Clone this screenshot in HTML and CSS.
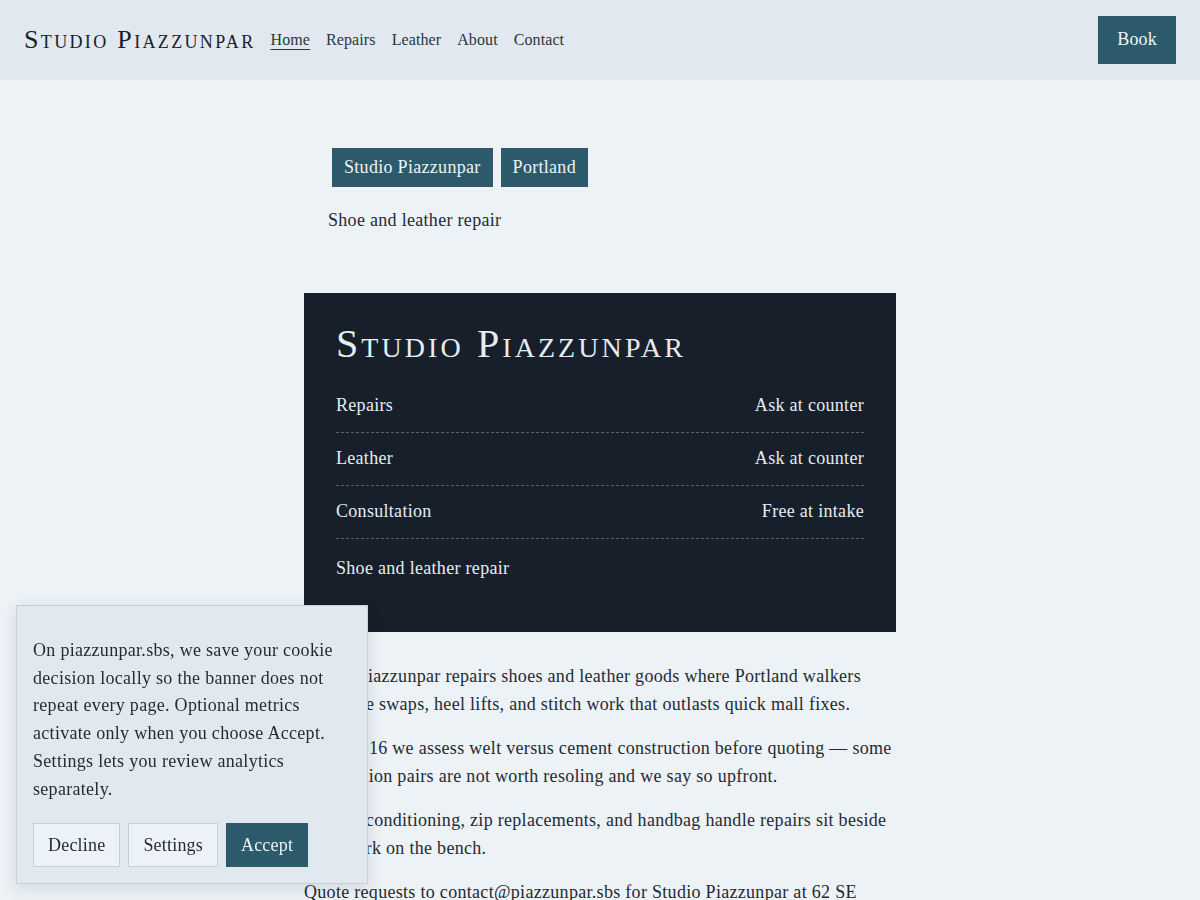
FILE: index.html
```html
<!DOCTYPE html>
<html lang="en">
<head>
  <meta charset="UTF-8" />
  <meta name="viewport" content="width=device-width, initial-scale=1.0"/>
  <title>Studio Piazzunpar - Shoe and leather repair</title>
  <link rel="stylesheet" href="styles.css">
</head>
<body>

  <header class="site-header">
    <a class="brand" href="#">Studio Piazzunpar</a>
    <nav class="main-nav">
      <a href="#" class="active">Home</a>
      <a href="#">Repairs</a>
      <a href="#">Leather</a>
      <a href="#">About</a>
      <a href="#">Contact</a>
    </nav>
    <a class="btn btn-book" href="#">Book</a>
  </header>

  <main class="page">
    <!-- Intro -->
    <section class="hero">
      <div class="tags">
        <span class="tag">Studio Piazzunpar</span>
        <span class="tag">Portland</span>
      </div>
      <p class="lead">Shoe and leather repair</p>
    </section>

    <!-- Services card -->
    <section class="card">
      <h1 class="card-title">Studio Piazzunpar</h1>
      <ul class="price-list">
        <li><span>Repairs</span><span>Ask at counter</span></li>
        <li><span>Leather</span><span>Ask at counter</span></li>
        <li><span>Consultation</span><span>Free at intake</span></li>
      </ul>
      <p class="card-note">Shoe and leather repair</p>
    </section>

    <section class="copy">
      <p>Studio Piazzunpar repairs shoes and leather goods where Portland walkers need sole swaps, heel lifts, and stitch work that outlasts quick mall fixes.</p>
      <p>Since 2016 we assess welt versus cement construction before quoting — some fast-fashion pairs are not worth resoling and we say so upfront.</p>
      <p>Leather conditioning, zip replacements, and handbag handle repairs sit beside shoe work on the bench.</p>
      <p>Quote requests to contact@piazzunpar.sbs for Studio Piazzunpar at 62 SE Morrison Street, Portland.</p>
    </section>
  </main>

  <!-- Cookie banner -->
  <div class="cookie-banner" id="cookie-banner">
    <p>On piazzunpar.sbs, we save your cookie decision locally so the banner does not repeat every page. Optional metrics activate only when you choose Accept. Settings lets you review analytics separately.</p>
    <div class="cookie-actions">
      <button class="btn btn-light" onclick="fecharBanner()">Decline</button>
      <button class="btn btn-light">Settings</button>
      <button class="btn btn-dark" onclick="fecharBanner()">Accept</button>
    </div>
  </div>

  <script>
    function fecharBanner() {
      document.getElementById("cookie-banner").style.display = 'none';
    }
  </script>
</body>
</html>
```

FILE: styles.css
```css
* { margin: 0; padding: 0; box-sizing: border-box; }
body {
  font-family: "Liberation Serif", "Times New Roman", serif;
  font-size: 18px;
  line-height: 1.55;
  letter-spacing: 0.3px;
  color: #1f2a33;
  background-color: #edf2f6;
}
a { color: inherit; text-decoration: none; }

.site-header {
  display: flex;
  align-items: center;
  height: 80px;
  padding: 0 24px;
  background-color: #e1e8f0;
}
.brand {
  font-size: 26px;
  font-variant: small-caps;
  letter-spacing: 0.09em;
  color: #17212a;
  line-height: 1;
}
.main-nav {
  display: flex;
  gap: 16px;
  margin-left: 15px;
  font-size: 16px;
  letter-spacing: 0.1px;
}
.main-nav a { color: #2a3640; }
.main-nav a.active {
  text-decoration: underline;
  text-underline-offset: 4px;
}

.btn {
  display: inline-flex;
  align-items: center;
  justify-content: center;
  height: 44px;
  padding: 0 14px;
  font-family: inherit;
  font-size: 18px;
  letter-spacing: 0.2px;
  border: 1px solid transparent;
  cursor: pointer;
}
.btn-book {
  margin-left: auto;
  height: 48px;
  padding: 0 18px;
  background-color: #2d5a6b;
  color: #eef3f6;
}

.page {
  width: 592px;
  margin: 0 auto;
  padding-bottom: 40px;
}

.hero {
  padding: 68px 24px 0;
}
.tags {
  display: flex;
  gap: 8px;
  padding-left: 4px;
}
.tag {
  padding: 8px 12px;
  line-height: 23px;
  background-color: #2d5a6b;
  color: #eef3f6;
}
.lead {
  margin-top: 20px;
}

.card {
  margin-top: 58px;
  padding: 32px;
  background-color: #17202a;
  color: #e6ecf1;
}
.card-title {
  font-size: 40px;
  font-weight: normal;
  font-variant: small-caps;
  letter-spacing: 0.077em;
  line-height: 38px;
  margin-bottom: 17px;
}
.price-list { list-style: none; }
.price-list li {
  display: flex;
  justify-content: space-between;
  padding: 12px 0;
  border-bottom: 1px dashed #56616b;
}
.card-note {
  margin: 16px 0 18px;
}

.copy {
  margin-top: 31px;
}
.copy p {
  margin-bottom: 16px;
}

.cookie-banner {
  position: fixed;
  left: 16px;
  bottom: 16px;
  width: 352px;
  padding: 16px;
  background-color: #e1e8f0;
  border: 1px solid #c6d0db;
  box-shadow: 0 4px 16px rgba(20, 30, 40, 0.12);
}
.cookie-banner p {
  margin: 15px 0 19px;
}
.cookie-actions {
  display: flex;
  gap: 8px;
}
.btn-light {
  background-color: #edf2f6;
  border-color: #c6d0db;
  color: #1f2a33;
}
.btn-dark {
  background-color: #2d5a6b;
  border-color: #2d5a6b;
  color: #eef3f6;
}
```
